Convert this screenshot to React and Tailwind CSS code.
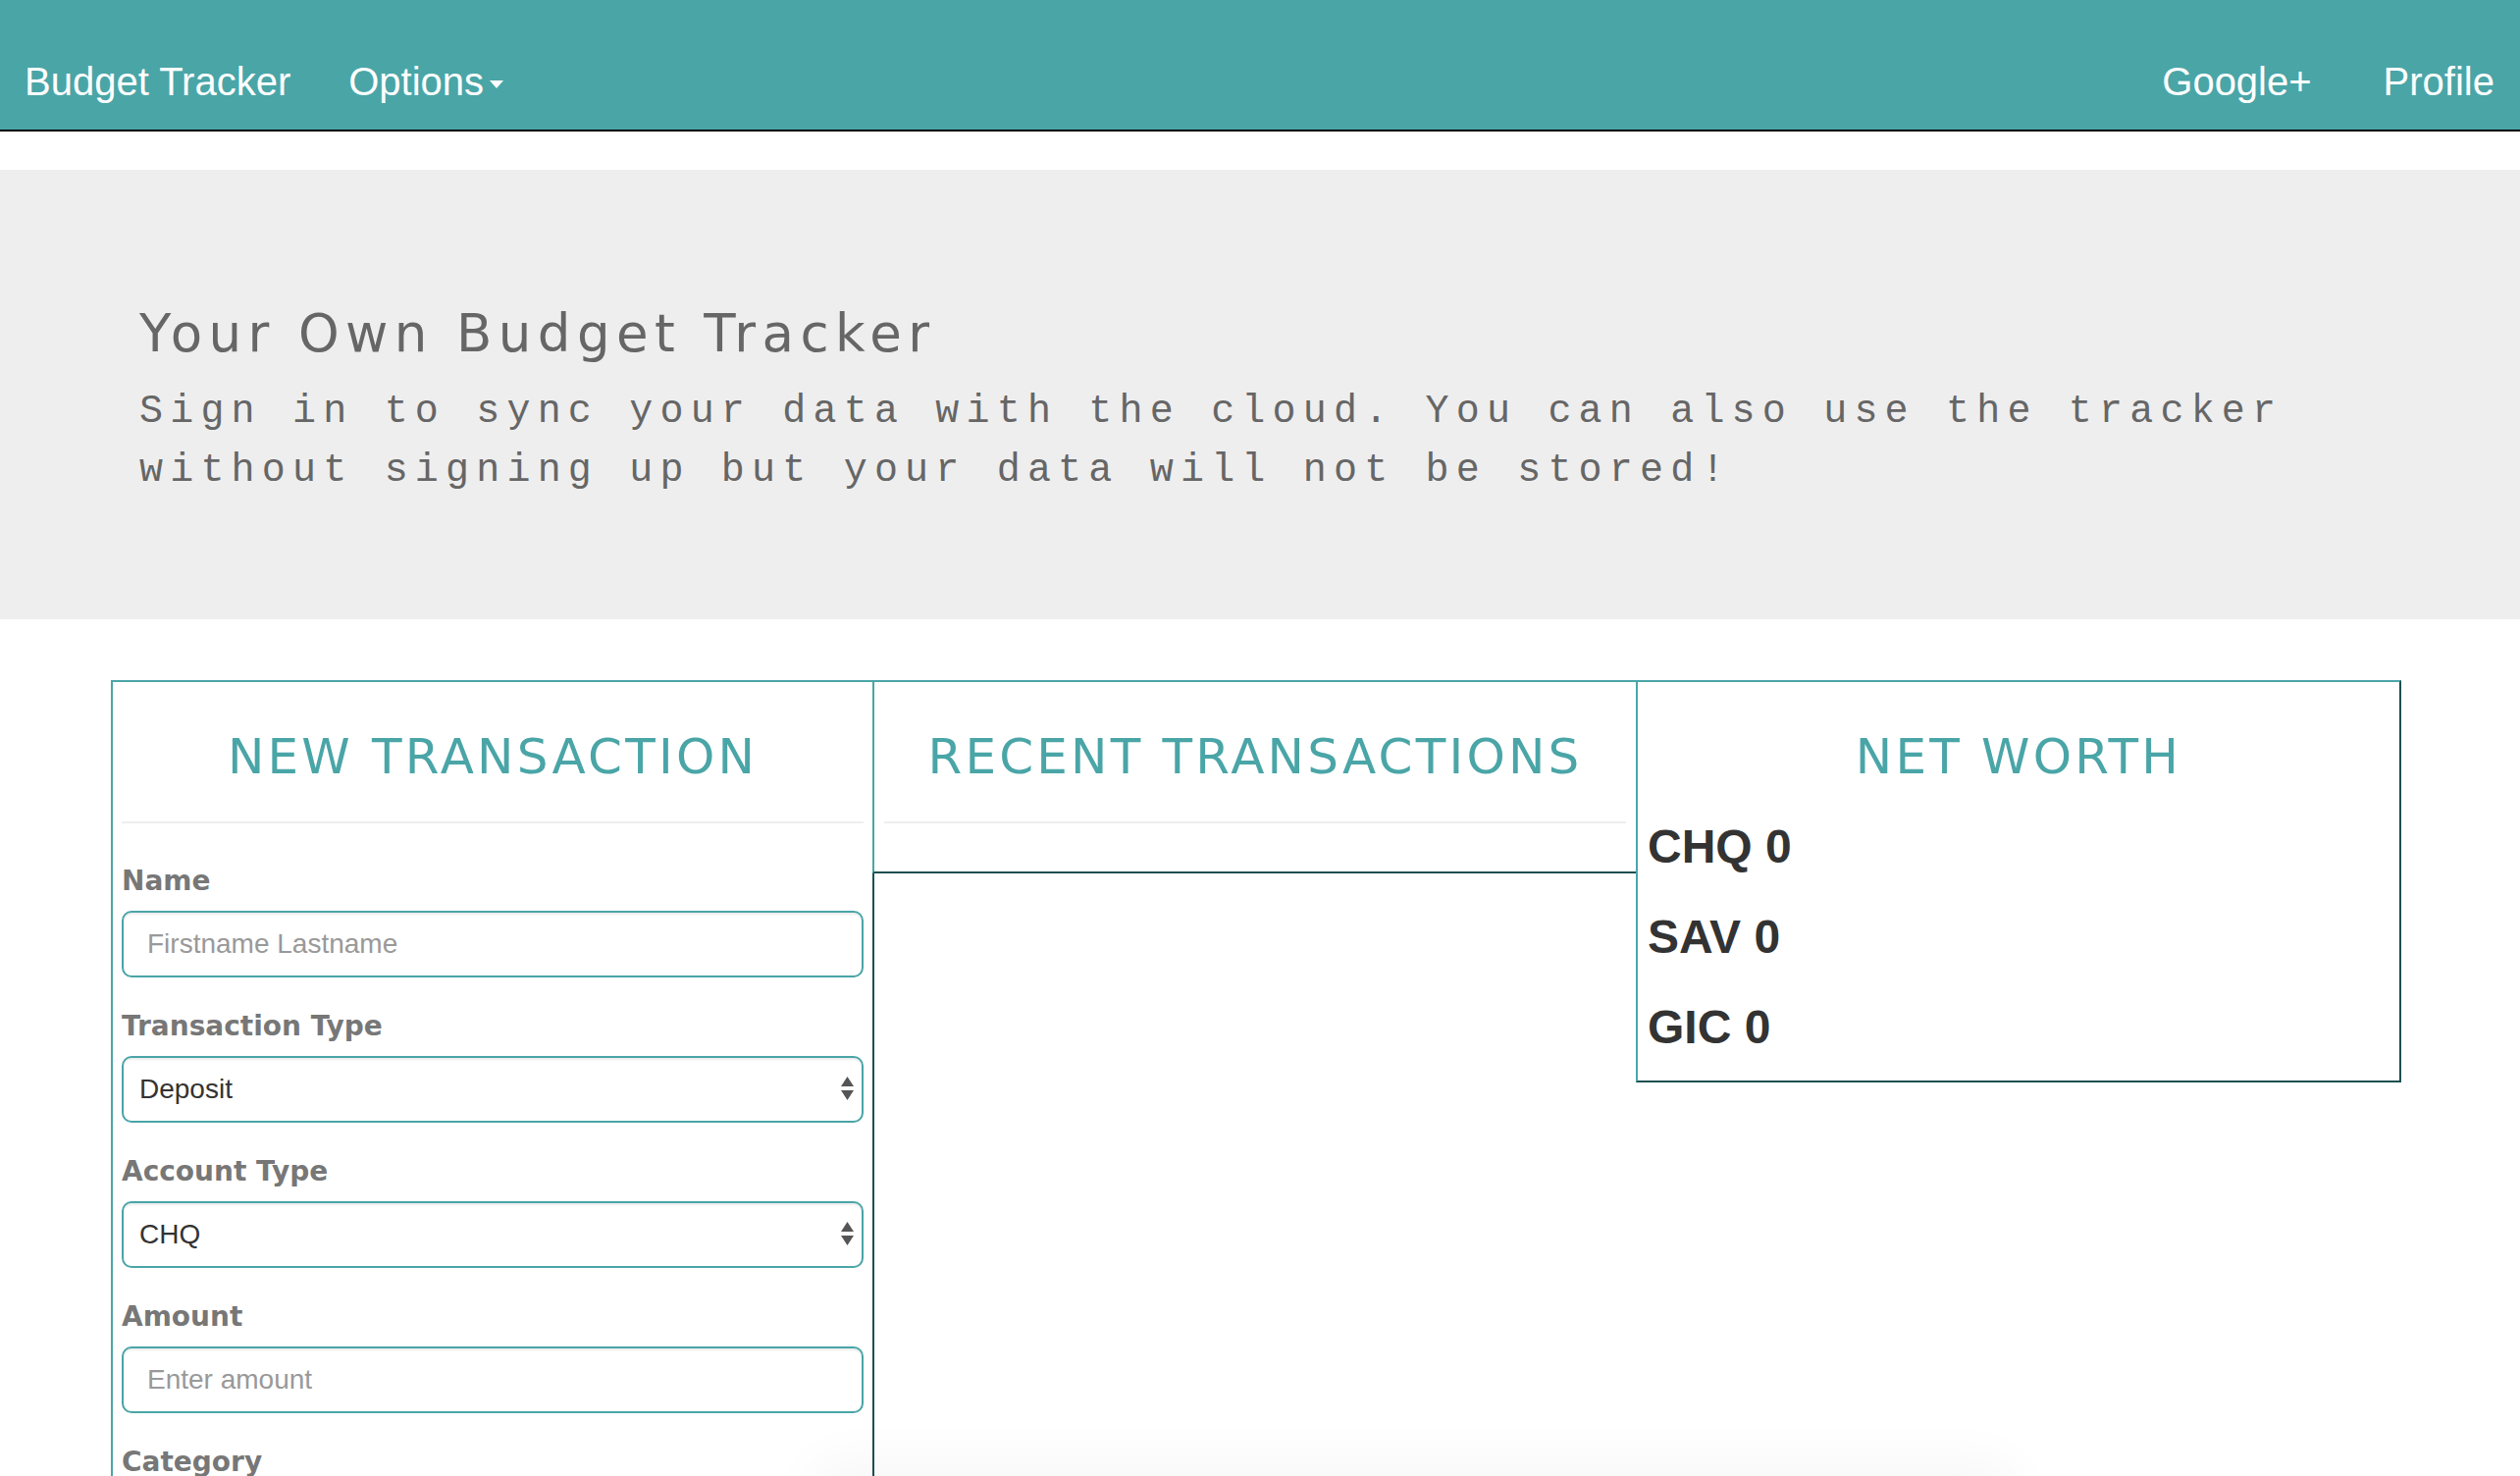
import React from "react";

const Label = ({ children }) => (
  <label className="block mb-[10px] font-['DejaVu_Sans',Verdana,sans-serif] text-[28px] leading-[40px] font-bold text-[#777]">
    {children}
  </label>
);

const TextInput = ({ placeholder }) => (
  <input
    type="text"
    placeholder={placeholder}
    className="block w-full h-[68px] px-[24px] border-2 border-[#4aa5a7] rounded-[10px] bg-white text-[28px] text-[#555] placeholder:text-[#999] shadow-[inset_0_2px_2px_rgba(0,0,0,0.075)] outline-none font-['Liberation_Sans',Arial,sans-serif]"
  />
);

const SelectInput = ({ options }) => (
  <div className="relative">
    <select
      defaultValue={options[0]}
      className="block w-full h-[68px] pl-[16px] pr-[40px] appearance-none border-2 border-[#4aa5a7] rounded-[10px] bg-white text-[28px] text-[#333] shadow-[inset_0_2px_2px_rgba(0,0,0,0.075)] outline-none font-['Liberation_Sans',Arial,sans-serif]"
    >
      {options.map((o) => (
        <option key={o}>{o}</option>
      ))}
    </select>
    {/* native mac style up/down arrows */}
    <svg className="absolute right-[10px] top-[21px] w-[13px] h-[24px] pointer-events-none" viewBox="0 0 13 24">
      <path d="M6.5 0 L13 10 L0 10 Z" fill="#555" />
      <path d="M0 14 L13 14 L6.5 24 Z" fill="#555" />
    </svg>
  </div>
);

const Heading = ({ children }) => (
  <h3 className="mt-[47px] text-center font-['DejaVu_Sans',Verdana,sans-serif] text-[50px] leading-[58px] tracking-[3.2px] font-normal text-[#4aa5a7]">
    {children}
  </h3>
);

const Rule = () => <div className="h-[2px] bg-[#eeeeee]" />;

const App = () => {
  const accounts = [
    { name: "CHQ", total: 0 },
    { name: "SAV", total: 0 },
    { name: "GIC", total: 0 },
  ];

  return (
    <div className="min-h-screen bg-white">
      {/* Navbar */}
      <nav className="h-[134px] bg-[#4aa5a7] border-b-2 border-black flex items-start pt-[59px] pl-[25px] pr-[26px] text-white text-[40px] leading-[48px] font-['Liberation_Sans',Arial,sans-serif]">
        <span>Budget Tracker</span>
        <span className="ml-[59px]">
          Options
          <span className="inline-block align-middle ml-[6px] w-0 h-0 border-x-[7px] border-x-transparent border-t-[8px] border-t-white" />
        </span>
        <span className="ml-auto">Google+</span>
        <span className="ml-[73px]">Profile</span>
      </nav>

      {/* Jumbotron */}
      <div className="mt-[39px] h-[458px] bg-[#eeeeee] pt-[135px]">
        <div className="ml-[142px] w-[2280px] text-[#666]">
          <h1 className="font-['DejaVu_Sans',Verdana,sans-serif] text-[53px] leading-[64px] tracking-[6.4px] font-normal">
            Your Own Budget Tracker
          </h1>
          <p className="mt-[18px] font-['Liberation_Mono','Courier_New',monospace] text-[40px] leading-[60px] tracking-[7.2px]">
            Sign in to sync your data with the cloud. You can also use the tracker without signing up but your data will not be stored!
          </p>
        </div>
      </div>

      {/* Columns */}
      <div className="mt-[62px] ml-[113px] flex items-start">
        {/* New transaction */}
        <div className="relative w-[778px] bg-white border-2 border-t-[#4aa5a7] border-l-[#4aa5a7] border-r-[#1d4f50] border-b-[#1d4f50] px-[9px] pb-[40px]">
          <Heading>NEW TRANSACTION</Heading>
          <div className="mt-[37px]">
            <Rule />
          </div>
          <form className="mt-[39px]">
            <div className="mb-[30px]">
              <Label>Name</Label>
              <TextInput placeholder="Firstname Lastname" />
            </div>
            <div className="mb-[30px]">
              <Label>Transaction Type</Label>
              <SelectInput options={["Deposit", "Withdrawal"]} />
            </div>
            <div className="mb-[30px]">
              <Label>Account Type</Label>
              <SelectInput options={["CHQ", "SAV", "GIC"]} />
            </div>
            <div className="mb-[30px]">
              <Label>Amount</Label>
              <TextInput placeholder="Enter amount" />
            </div>
            <div className="mb-[30px]">
              <Label>Category</Label>
              <SelectInput options={["Income", "Food", "Bills", "Other"]} />
            </div>
          </form>
        </div>

        {/* Recent transactions */}
        <div className="relative -ml-[2px] w-[780px] bg-white border-2 border-t-[#4aa5a7] border-l-[#4aa5a7] border-r-[#1d4f50] border-b-[#1d4f50] px-[10px] pb-[49px]">
          <Heading>RECENT TRANSACTIONS</Heading>
          <div className="mt-[37px]">
            <Rule />
          </div>
        </div>

        {/* Net worth */}
        <div className="relative -ml-[2px] w-[780px] bg-white border-2 border-t-[#4aa5a7] border-l-[#4aa5a7] border-r-[#1d4f50] border-b-[#1d4f50] px-[10px] pb-[8px]">
          <Heading>NET WORTH</Heading>
          <div className="mt-[17px] font-['Liberation_Sans',Arial,sans-serif] text-[48px] leading-[92px] font-bold text-[#333]">
            {accounts.map((a) => (
              <div key={a.name}>
                {a.name} {a.total}
              </div>
            ))}
          </div>
        </div>
      </div>

      {/* faint shadow from a panel sitting just below the viewport */}
      <div className="fixed left-[840px] -bottom-[40px] w-[1200px] h-[40px] rounded-[20px] shadow-[0_0_50px_20px_rgba(0,0,0,0.03)] pointer-events-none" />
    </div>
  );
};

export default App;
